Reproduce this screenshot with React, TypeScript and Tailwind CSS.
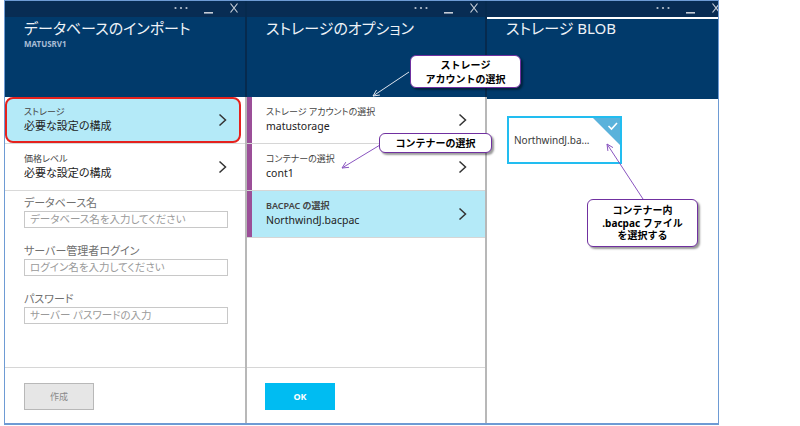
import React from "react";

function Strip() {
  return (
    <div className="h-[16px] bg-[#082c53] flex items-center justify-end pr-[7px]">
      <svg width="14" height="12" className="mr-[16px]">
        <circle cx="1.5" cy="5" r="1.1" fill="#b9c3d0" />
        <circle cx="7" cy="5" r="1.1" fill="#b9c3d0" />
        <circle cx="12.5" cy="5" r="1.1" fill="#b9c3d0" />
      </svg>
      <svg width="9" height="12" className="mr-[17px]">
        <rect x="0" y="9" width="9" height="1.6" fill="#c5ccd6" />
      </svg>
      <svg width="8" height="12">
        <path d="M0.5 0.5 L7.5 9.5 M7.5 0.5 L0.5 9.5" stroke="#c5ccd6" strokeWidth="1.2" fill="none" />
      </svg>
    </div>
  );
}

function Header({ title, sub }: { title: string; sub?: string }) {
  return (
    <div className="h-[80px] bg-[#013a6b] pl-[19px]">
      <div className="mt-[2px] text-[15px] leading-[18px] text-[#eef2f7] [font-feature-settings:'palt'] whitespace-nowrap">
        {title}
      </div>
      {sub && (
        <div className="mt-[2px] text-[8px] leading-[10px] font-bold text-[#a8bdd6]">{sub}</div>
      )}
    </div>
  );
}

function Chevron() {
  return (
    <svg width="9" height="14" className="shrink-0">
      <path d="M1.5 1.5 L7.5 7 L1.5 12.5" stroke="#333" strokeWidth="1.5" fill="none" />
    </svg>
  );
}

function Field({ label, ph }: { label: string; ph: string }) {
  return (
    <div className="mb-[16px]">
      <div className="text-[11px] leading-[14px] text-[#707070] [font-feature-settings:'palt']">{label}</div>
      <div className="mt-[1px] h-[17px] border border-[#c8c8c8] pl-[5px] text-[10.5px] leading-[15px] text-[#9a9a9a] [font-feature-settings:'palt'] whitespace-nowrap overflow-hidden">
        {ph}
      </div>
    </div>
  );
}

function Sep() {
  return (
    <div className="w-[2px] flex flex-col shrink-0">
      <div className="h-[96px] bg-[#062a4e]" />
      <div className="flex-1 bg-[#b8b8b8]" />
    </div>
  );
}

function OptItem({ label, value, active, boldLabel }: { label: React.ReactNode; value: string; active?: boolean; boldLabel?: boolean }) {
  return (
    <div className={"h-[47px] border-b border-[#d6d6d6] flex " + (active ? "bg-[#b4eaf8]" : "bg-white")}>
      <div className="w-[5px] bg-[#9b4f98] shrink-0" />
      <div className="flex-1 flex items-center justify-between pl-[14px] pr-[18px]">
        <div>
          <div className={"text-[9px] leading-[12px] text-[#444] [font-feature-settings:'palt'] " + (boldLabel ? "font-semibold" : "")}>{label}</div>
          <div className="text-[10.5px] leading-[16px] text-[#222]">{value}</div>
        </div>
        <Chevron />
      </div>
    </div>
  );
}

function arrowHead(x1: number, y1: number, x2: number, y2: number, len = 7, ang = 0.45) {
  const a = Math.atan2(y1 - y2, x1 - x2);
  const p1 = [x2 + len * Math.cos(a + ang), y2 + len * Math.sin(a + ang)];
  const p2 = [x2 + len * Math.cos(a - ang), y2 + len * Math.sin(a - ang)];
  return `M${p1[0]} ${p1[1]} L${x2} ${y2} L${p2[0]} ${p2[1]}`;
}

export default function App() {
  return (
    <div className="w-[800px] h-[426px] bg-white relative overflow-hidden [font-family:'Noto_Sans','Noto_Sans_CJK_JP',sans-serif]">
      <div className="ml-[4px] w-[715px] h-[425px] border-t border-l border-r border-b-2 border-[#6e9bd4] flex">
        {/* Column 1 */}
        <div className="w-[240px] flex flex-col shrink-0">
          <Strip />
          <Header title="データベースのインポート" sub="MATUSRV1" />
          <div className="flex-1 bg-white">
            <div className="h-[47px] border-b border-[#d9d9d9] pr-[4px]">
              <div className="h-[46px] rounded-[8px] border-2 border-[#e5211d] bg-[#b4eaf8] flex items-center justify-between pl-[17px] pr-[12px]">
                <div>
                  <div className="text-[9px] leading-[12px] text-[#444] [font-feature-settings:'palt']">ストレージ</div>
                  <div className="text-[11px] leading-[16px] text-[#222] [font-feature-settings:'palt']">必要な設定の構成</div>
                </div>
                <Chevron />
              </div>
            </div>
            <div className="h-[47px] border-b border-[#d9d9d9] flex items-center justify-between pl-[19px] pr-[18px]">
              <div>
                <div className="text-[9px] leading-[12px] text-[#444] [font-feature-settings:'palt']">価格レベル</div>
                <div className="text-[11px] leading-[16px] text-[#222] [font-feature-settings:'palt']">必要な設定の構成</div>
              </div>
              <Chevron />
            </div>
            <div className="pl-[19px] pr-[17px] pt-[5px]">
              <Field label="データベース名" ph="データベース名を入力してください" />
              <Field label="サーバー管理者ログイン" ph="ログイン名を入力してください" />
              <Field label="パスワード" ph="サーバー パスワードの入力" />
            </div>
          </div>
          <div className="h-[56px] border-t border-[#d6d6d6] pt-[15px] pl-[19px] bg-white">
            <div className="w-[70px] h-[27px] bg-[#e6e6e6] border border-[#b8b8b8] flex items-center justify-center text-[9px] text-[#8a8a8a]">
              作成
            </div>
          </div>
        </div>
        <Sep />
        {/* Column 2 */}
        <div className="w-[238px] flex flex-col shrink-0">
          <Strip />
          <Header title="ストレージのオプション" />
          <div className="flex-1 bg-white">
            <OptItem label="ストレージ アカウントの選択" value="matustorage" />
            <OptItem label="コンテナーの選択" value="cont1" />
            <OptItem label="BACPAC の選択" value="NorthwindJ.bacpac" active boldLabel />
          </div>
          <div className="h-[56px] border-t border-[#d6d6d6] pt-[15px] pl-[18px] bg-white">
            <div className="w-[70px] h-[27px] bg-[#00bcf2] flex items-center justify-center text-[9px] font-bold text-white">
              OK
            </div>
          </div>
        </div>
        <Sep />
        {/* Column 3 */}
        <div className="flex-1 flex flex-col overflow-hidden">
          <div className="w-[240px] shrink-0">
            <Strip />
            <Header title="ストレージ BLOB" />
          </div>
          <div className="flex-1 bg-white pl-[20px] pt-[17px]">
            <div className="relative w-[115px] h-[48px] border-2 border-[#22bdf0] flex items-center pl-[5px]">
              <span className="text-[10px] text-[#3a3a3a] whitespace-nowrap">NorthwindJ.ba...</span>
              <svg width="27" height="27" className="absolute top-0 right-0">
                <polygon points="0,0 27,0 27,27" fill="#5ab2db" />
                <path d="M15.5 8 L18.5 11 L24 5" stroke="#fff" strokeWidth="1.6" fill="none" />
              </svg>
            </div>
          </div>
        </div>
      </div>

      {/* Arrows */}
      <svg width="800" height="426" className="absolute inset-0 pointer-events-none">
        <line x1="409" y1="72" x2="373" y2="96" stroke="#dfe4ee" strokeWidth="1" />
        <path d={arrowHead(409, 72, 373, 96)} stroke="#dfe4ee" strokeWidth="1" fill="none" />
        <line x1="380" y1="145" x2="342" y2="168" stroke="#8a55c0" strokeWidth="1" />
        <path d={arrowHead(380, 145, 342, 168)} stroke="#8a55c0" strokeWidth="1" fill="none" />
        <line x1="643" y1="199" x2="607" y2="144" stroke="#8a55c0" strokeWidth="1" />
        <path d={arrowHead(643, 199, 607, 144)} stroke="#8a55c0" strokeWidth="1" fill="none" />
      </svg>

      {/* Callouts */}
      <div className="absolute left-[410px] top-[55px] w-[111px] h-[33px] bg-white border-[1.5px] border-[#7030a0] rounded-[6px] shadow-[2px_2px_2px_rgba(0,0,0,0.4)] flex flex-col items-center justify-center text-[10px] leading-[14px] font-bold text-black">
        <div>ストレージ</div>
        <div>アカウントの選択</div>
      </div>
      <div className="absolute left-[379px] top-[133px] w-[113px] h-[20px] bg-white border-[1.5px] border-[#7030a0] rounded-[6px] shadow-[2px_2px_2px_rgba(0,0,0,0.4)] flex items-center justify-center text-[10px] leading-[14px] font-bold text-black">
        コンテナーの選択
      </div>
      <div className="absolute left-[587px] top-[199px] w-[111px] h-[48px] bg-white border-[1.5px] border-[#7030a0] rounded-[6px] shadow-[2px_2px_2px_rgba(0,0,0,0.4)] flex flex-col items-center justify-center text-[10px] leading-[12.5px] font-bold text-black">
        <div>コンテナー内</div>
        <div>.bacpac ファイル</div>
        <div>を選択する</div>
      </div>
    </div>
  );
}
